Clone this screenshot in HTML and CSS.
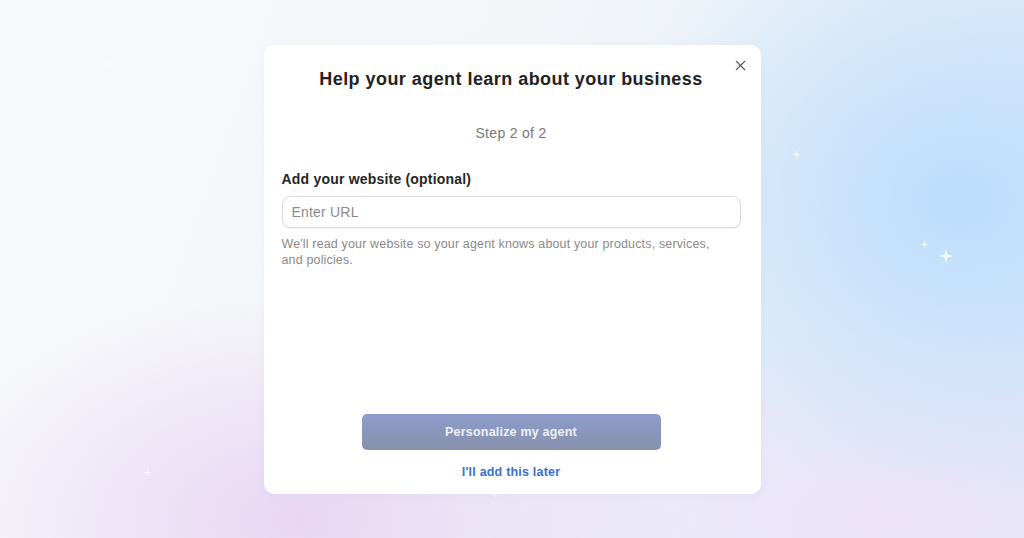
FILE: index.html
```html
<!DOCTYPE html>
<html lang="en">

<head>
     <meta charset="UTF-8">
     <meta name="viewport" content="width=device-width, initial-scale=1.0">
     <title>Personalize your agent</title>
     <link rel="stylesheet" href="styles.css">
</head>

<body>
     <div id="wrapper">
          <!-- sparkles on the backdrop -->
          <span class="sparkle sparkle-sm s1"></span>
          <span class="sparkle sparkle-sm s2"></span>
          <span class="sparkle sparkle-sm s3"></span>
          <span class="sparkle sparkle-lg s4"></span>
          <span class="sparkle sparkle-sm s5"></span>
          <span class="sparkle sparkle-sm s6"></span>

          <div class="modal">
               <button class="close-btn" aria-label="Close">
                    <svg width="11" height="11" viewBox="0 0 12 12">
                         <path d="M1.5 1.5 L10.5 10.5 M10.5 1.5 L1.5 10.5" stroke="#555" stroke-width="1.5" stroke-linecap="round" />
                    </svg>
               </button>

               <h2 class="modal-title">Help your agent learn about your business</h2>
               <p class="step">Step 2 of 2</p>

               <div class="field">
                    <label class="field-label" for="url">Add your website (optional)</label>
                    <input id="url" class="field-input" type="text" placeholder="Enter URL">
                    <p class="field-help">We'll read your website so your agent knows about your products, services, and policies.</p>
               </div>

               <div class="actions">
                    <button class="primary-btn">Personalize my agent</button>
                    <a class="later-link" href="#">I'll add this later</a>
               </div>
          </div>
     </div>
</body>

</html>
```

FILE: styles.css
```css
* {
     padding: 0;
     margin: 0;
     box-sizing: border-box;
     font-family: 'Liberation Sans', Arial, sans-serif;
}

body {
     height: 538px;
     overflow: hidden;
     background:
          radial-gradient(ellipse 360px 300px at 960px 200px, rgba(188, 221, 252, 1), rgba(188, 221, 252, 0) 100%),
          radial-gradient(ellipse 380px 230px at 300px 520px, rgba(232, 212, 244, 0.95), rgba(232, 212, 244, 0) 100%),
          radial-gradient(ellipse 420px 200px at 880px 520px, rgba(238, 226, 250, 0.9), rgba(238, 226, 250, 0) 100%),
          linear-gradient(110deg, #f8f9fb 0%, #f3f6f9 45%, #dde9f8 100%);
}

#wrapper {
     position: relative;
     height: 100%;
     display: flex;
     justify-content: center;
     align-items: center;
}

.sparkle {
     position: absolute;
     background: #fff;
     clip-path: polygon(50% 0, 58% 42%, 100% 50%, 58% 58%, 50% 100%, 42% 58%, 0 50%, 42% 42%);
}

.sparkle-sm {
     width: 9px;
     height: 9px;
}

.sparkle-lg {
     width: 16px;
     height: 16px;
     filter: drop-shadow(0 0 3px #fff);
}

.s1 { left: 104px; top: 60px; }
.s2 { left: 792px; top: 150px; }
.s3 { left: 920px; top: 240px; }
.s4 { left: 938px; top: 248px; }
.s5 { left: 143px; top: 468px; }
.s6 { left: 491px; top: 489px; }

.modal {
     position: relative;
     width: 497px;
     height: 449px;
     background: #fff;
     border-radius: 10px;
     padding: 22px 20px 15px 18px;
     display: flex;
     flex-direction: column;
     box-shadow: 0 2px 10px rgba(150, 160, 190, 0.08);
}

.close-btn {
     position: absolute;
     top: 15px;
     right: 15px;
     width: 11px;
     height: 11px;
     border: none;
     background: none;
     cursor: pointer;
     display: flex;
}

.modal-title {
     text-align: center;
     font-size: 18px;
     line-height: 24px;
     font-weight: 700;
     letter-spacing: 0.45px;
     color: #222;
}

.step {
     text-align: center;
     margin-top: 32px;
     font-size: 14px;
     line-height: 20px;
     letter-spacing: 0.3px;
     color: #777;
}

.field {
     margin-top: 27px;
}

.field-label {
     display: block;
     font-size: 14px;
     line-height: 18px;
     font-weight: 700;
     letter-spacing: 0.2px;
     color: #262626;
}

.field-input {
     display: block;
     width: 100%;
     height: 32px;
     margin-top: 8px;
     padding: 0 9px;
     border: 1px solid #dcdcdc;
     border-radius: 8px;
     font-size: 14px;
     color: #333;
     outline: none;
     box-shadow: 0 1px 2px rgba(0, 0, 0, 0.05);
}

.field-input::placeholder {
     color: #8a8a8a;
     letter-spacing: 0.2px;
}

.field-help {
     margin-top: 8px;
     font-size: 12.5px;
     line-height: 16px;
     letter-spacing: 0.15px;
     color: #8a8a8a;
     padding-right: 10px;
}

.actions {
     margin-top: auto;
     display: flex;
     flex-direction: column;
     align-items: center;
     gap: 15px;
}

.primary-btn {
     width: 299px;
     height: 36px;
     border: none;
     border-radius: 5px;
     background: linear-gradient(180deg, #8d9ccb 0%, #8691ab 100%);
     color: #eef0f6;
     font-size: 12.5px;
     font-weight: 700;
     letter-spacing: 0.2px;
     cursor: pointer;
}

.later-link {
     font-size: 12.5px;
     font-weight: 700;
     letter-spacing: 0.2px;
     color: #3c6fd1;
     text-decoration: none;
}
```
